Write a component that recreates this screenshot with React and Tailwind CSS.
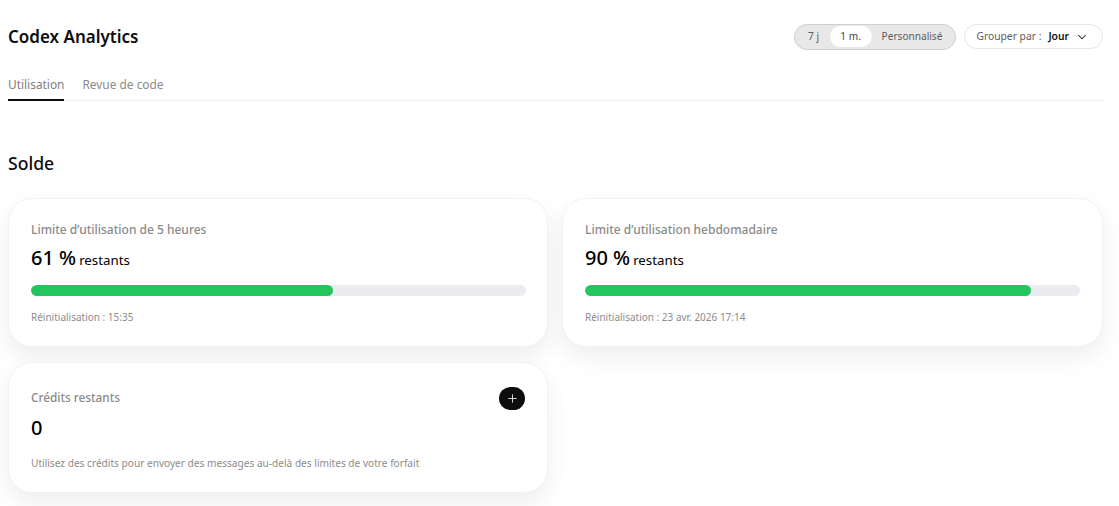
import React from 'react';
import { ChevronDown, Plus } from 'lucide-react';

const cardClass = 'bg-white rounded-[24px] border border-[#f2f2f2] shadow-[0_10px_24px_rgba(0,0,0,0.07)] pl-[22px]';

function LimitCard({ titre, pourcent, reset, padding }) {
  return (
    <div className={`${cardClass} ${padding} h-[149px] pt-[22px]`}>
      <p className="text-[12px] leading-[18px] font-medium text-[#8a8a8a]">{titre}</p>
      <p className="mt-[4px] leading-[30px] text-black flex items-baseline gap-[3px]">
        <span className="text-[20px] font-medium">{pourcent} %</span>
        <span className="text-[13.3px]">restants</span>
      </p>
      <div className="mt-[10px] h-[11px] rounded-full bg-[#ececf0] overflow-hidden">
        <div className="h-full rounded-full bg-[#22c55e]" style={{ width: `${pourcent}%` }}></div>
      </div>
      <p className="mt-[14px] text-[10px] leading-[14px] text-[#8c8c8c]">{reset}</p>
    </div>
  );
}

export default function App() {
  return (
    <div className="w-[1119px] h-[506px] overflow-hidden bg-white pl-2 pr-4 font-['Noto_Sans',sans-serif]">
      <div className="flex items-center justify-between pt-[23px] h-[50px]">
        <h1 className="text-[17px] leading-[26px] font-semibold text-[#0d0d0d]">Codex Analytics</h1>
        <div className="flex items-center gap-[8px]">
          <div className="flex items-center h-[26px] rounded-full bg-[#e8e8e8] border border-[#cfcfcf] text-[10.1px] text-[#5d5d5d] pl-[3px] pr-[3px]">
            <span className="w-[32px] text-center">7 j</span>
            <span className="h-[21px] w-[42px] rounded-full bg-white flex items-center justify-center text-[#444]">1 m.</span>
            <span className="pl-[10px] pr-[10px]">Personnalisé</span>
          </div>
          <div className="flex items-center h-[25px] rounded-full border border-[#e6e6e6] bg-white pl-[11px] pr-[13px] text-[10.3px]">
            <span className="text-[#5d5d5d]">Grouper par :</span>
            <span className="ml-[7px] font-semibold text-[#111]">Jour</span>
            <ChevronDown className="ml-[6px] w-[14px] h-[14px] text-[#222]" strokeWidth={1.8} />
          </div>
        </div>
      </div>

      <div className="flex gap-[18px] mt-[20px] h-[31px] border-b border-[#eeeeee] text-[11.9px] text-[#8a8a8a]">
        <div className="h-[31px] border-b-2 border-[#0d0d0d] pt-[5px] leading-[18px] text-[#808080]">Utilisation</div>
        <div className="pt-[5px] leading-[18px]">Revue de code</div>
      </div>

      <h2 className="mt-[49px] text-[17.6px] leading-[27px] font-medium text-[#0d0d0d]">Solde</h2>

      <div className="grid grid-cols-[540px_541px] gap-x-[14px] gap-y-[15px] mt-[21px]">
        <LimitCard padding="pr-[21px]" titre="Limite d’utilisation de 5 heures" pourcent={61} reset="Réinitialisation : 15:35" />
        <LimitCard padding="pr-[22px]" titre="Limite d’utilisation hebdomadaire" pourcent={90} reset="Réinitialisation : 23 avr. 2026 17:14" />
        <div className={`${cardClass} pr-[22px] h-[131px] pt-[22px]`}>
          <div className="flex items-center justify-between h-[26px]">
            <p className="text-[11.8px] font-medium text-[#8a8a8a]">Crédits restants</p>
            <div className="w-[26px] h-[23px] rounded-full bg-[#0d0d0d] text-white flex items-center justify-center">
              <Plus className="w-[13px] h-[13px]" strokeWidth={1.5} />
            </div>
          </div>
          <p className="mt-[2px] text-[20px] leading-[30px] font-medium text-black">0</p>
          <p className="mt-[13px] text-[10.12px] leading-[14px] text-[#8c8c8c]">Utilisez des crédits pour envoyer des messages au-delà des limites de votre forfait</p>
        </div>
      </div>
    </div>
  );
}
